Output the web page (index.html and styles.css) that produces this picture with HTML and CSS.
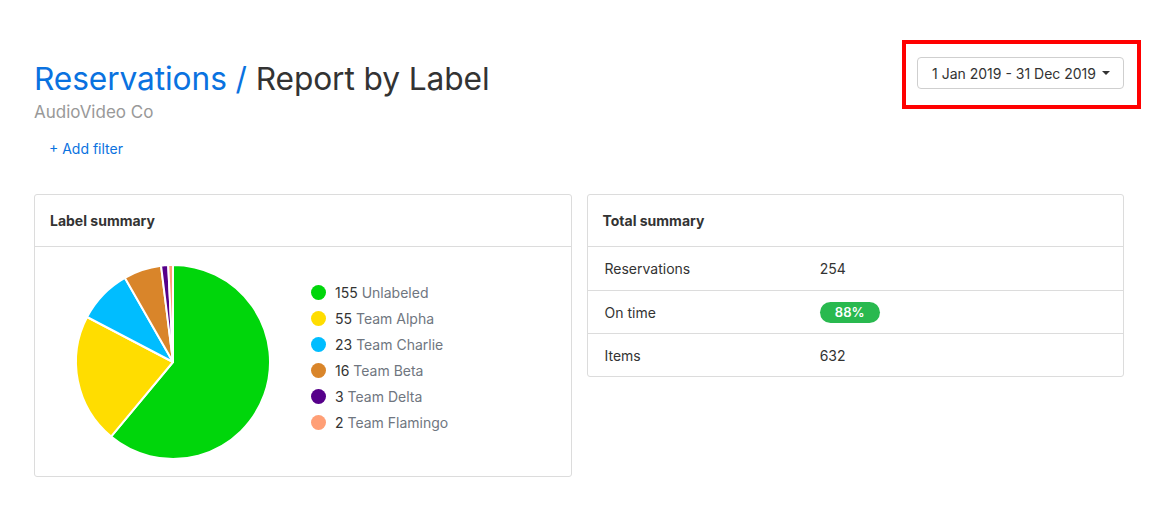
FILE: index.html
```html
<!DOCTYPE html>
<html lang="en">
<head>
<meta charset="utf-8">
<title>Report by Label</title>
<link rel="stylesheet" href="styles.css">
</head>
<body>
<div class="page">
  <div class="header">
    <div class="heading">
      <h1 class="title"><a class="crumb" href="#">Reservations /</a> Report by Label</h1>
      <div class="subtitle">AudioVideo Co</div>
      <a class="add-filter" href="#">+ Add filter</a>
    </div>
    <div class="range-mark">
      <button class="range-btn" type="button">1 Jan 2019 - 31 Dec 2019 <span class="caret"></span></button>
    </div>
  </div>

  <div class="cards">
    <div class="card">
      <div class="card-head">Label summary</div>
      <div class="card-body pie-body">
        <svg class="pie" width="246" height="194" viewBox="0 0 246 194">
          <g stroke="#fff" stroke-width="2" stroke-linejoin="round">
            <path fill="#00d60b" d="M123,97 L123,0 A97,97 0 1 1 61.06,171.64 Z"/>
            <path fill="#ffdd00" d="M123,97 L61.06,171.64 A97,97 0 0 1 37.07,52.0 Z"/>
            <path fill="#00bdff" d="M123,97 L37.07,52.0 A97,97 0 0 1 74.84,12.79 Z"/>
            <path fill="#d9852a" d="M123,97 L74.84,12.79 A97,97 0 0 1 111.03,0.74 Z"/>
            <path fill="#56008a" d="M123,97 L111.03,0.74 A97,97 0 0 1 118.20,0.12 Z"/>
            <path fill="#ff9f76" d="M123,97 L118.20,0.12 A97,97 0 0 1 123,0 Z"/>
          </g>
        </svg>
        <ul class="legend">
          <li><span class="dot dot-green"></span><span class="entry"><span class="num">155</span> <span class="lab">Unlabeled</span></span></li>
          <li><span class="dot dot-yellow"></span><span class="entry"><span class="num">55</span> <span class="lab">Team Alpha</span></span></li>
          <li><span class="dot dot-blue"></span><span class="entry"><span class="num">23</span> <span class="lab">Team Charlie</span></span></li>
          <li><span class="dot dot-brown"></span><span class="entry"><span class="num">16</span> <span class="lab">Team Beta</span></span></li>
          <li><span class="dot dot-purple"></span><span class="entry"><span class="num">3</span> <span class="lab">Team Delta</span></span></li>
          <li><span class="dot dot-salmon"></span><span class="entry"><span class="num">2</span> <span class="lab">Team Flamingo</span></span></li>
        </ul>
      </div>
    </div>

    <div class="card">
      <div class="card-head">Total summary</div>
      <div class="row"><div class="cell key">Reservations</div><div class="cell val">254</div></div>
      <div class="row"><div class="cell key">On time</div><div class="cell val"><span class="badge">88%</span></div></div>
      <div class="row"><div class="cell key">Items</div><div class="cell val">632</div></div>
    </div>
  </div>
</div>
</body>
</html>
```

FILE: styles.css
```css
* { box-sizing: border-box; }

body {
  margin: 0;
  background: #fff;
  color: #333;
  font-family: Inter, "Noto Sans", "Liberation Sans", sans-serif;
}

.page {
  padding: 44px 34px 0 34px;
}

.header {
  display: flex;
  justify-content: space-between;
  align-items: flex-start;
}

.heading {
  display: flex;
  flex-direction: column;
  align-items: flex-start;
  padding-top: 16px;
}

.title {
  margin: 0;
  font-size: 31.7px;
  font-weight: 400;
  line-height: 38px;
  color: #333;
  letter-spacing: -0.1px;
}

.crumb {
  color: #0a72e0;
  text-decoration: none;
}

.subtitle {
  margin-top: 3px;
  font-size: 17px;
  line-height: 22px;
  color: #999;
}

.add-filter {
  margin: 16px 0 0 15px;
  font-size: 14px;
  line-height: 20px;
  color: #0a72e0;
  text-decoration: none;
}

.range-mark {
  border: 4px solid #ff0000;
  padding: 13px 13px 16px 11px;
  margin-right: -17px;
  margin-top: -4px;
}

.range-btn {
  display: flex;
  align-items: center;
  gap: 6px;
  height: 32px;
  padding: 0 13px 0 14px;
  background: #fff;
  border: 1px solid #cfcfcf;
  border-radius: 4px;
  font-family: inherit;
  font-size: 14px;
  color: #333;
}

.caret {
  width: 0;
  height: 0;
  border-left: 4px solid transparent;
  border-right: 4px solid transparent;
  border-top: 4px solid #333;
}

.cards {
  margin-top: 35px;
  display: grid;
  grid-template-columns: 1fr 1fr;
  gap: 15px;
  align-items: start;
}

.card {
  border: 1px solid #dcdcdc;
  border-radius: 3px;
  background: #fff;
}

.card-head {
  height: 52px;
  display: flex;
  align-items: center;
  padding: 0 15px;
  font-size: 14px;
  font-weight: 700;
  color: #333;
  border-bottom: 1px solid #dcdcdc;
}

.pie-body {
  display: flex;
  align-items: center;
  padding: 18px 15px 17px 15px;
  gap: 15px;
}

.pie {
  display: block;
  overflow: visible;
}

.legend {
  list-style: none;
  margin: 0 0 10px 0;
  padding: 0;
  display: flex;
  flex-direction: column;
  gap: 6px;
}

.legend li {
  display: flex;
  align-items: center;
  height: 20px;
  font-size: 14px;
}

.entry { white-space: nowrap; }

.dot {
  width: 15px;
  height: 15px;
  border-radius: 50%;
  margin-right: 9px;
}

.dot-green { background: #00d60b; }
.dot-yellow { background: #ffdd00; }
.dot-blue { background: #00bdff; }
.dot-brown { background: #d9852a; }
.dot-purple { background: #56008a; }
.dot-salmon { background: #ff9f76; }

.num { color: #333; }
.lab { color: #6f7680; }

.row {
  display: flex;
  align-items: center;
  height: 43px;
  font-size: 14px;
  color: #333;
}

.row + .row {
  border-top: 1px solid #dcdcdc;
}

.key {
  width: 40%;
  padding-left: 17px;
}

.val {
  padding-left: 18px;
}

.badge {
  display: inline-block;
  min-width: 60px;
  text-align: center;
  background: #29b94f;
  color: #fff;
  font-size: 13px;
  font-weight: 600;
  line-height: 21px;
  border-radius: 11px;
}
```
